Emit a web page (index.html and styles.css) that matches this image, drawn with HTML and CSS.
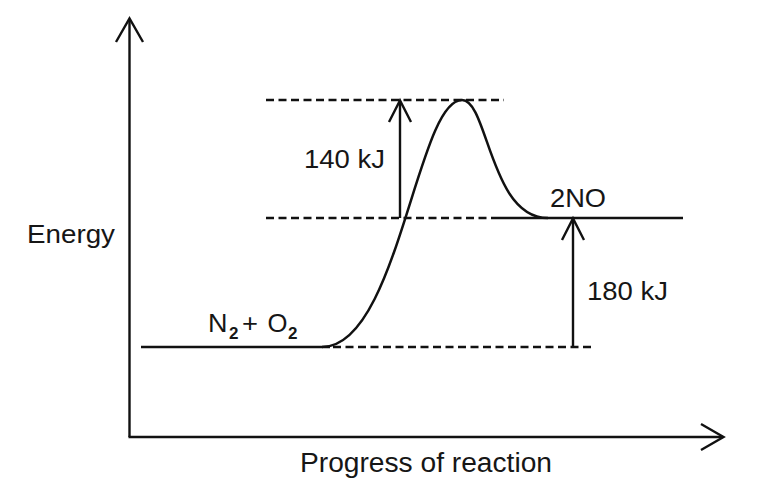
FILE: index.html
```html
<!DOCTYPE html>
<html lang="en">
<head>
<meta charset="utf-8">
<title>Energy profile: N2 + O2 → 2NO</title>
<link rel="stylesheet" href="styles.css">
</head>
<body>
<main class="page">
  <svg class="diagram" viewBox="0 0 758 486" width="758" height="486" xmlns="http://www.w3.org/2000/svg">
    <!-- axes -->
    <path class="line" d="M129.5 437 L129.5 19"/>
    <path class="line" d="M116 42 L129.5 18.5 L143 42"/>
    <path class="line" d="M128.5 437 L723 437"/>
    <path class="line" d="M701 424 L723.5 437 L701 450"/>

    <!-- levels -->
    <path class="line" d="M141 347 L330 347"/>
    <path class="dash" d="M333 347 L593 347"/>
    <path class="dash" d="M266 218 L495 218"/>
    <path class="line" d="M495 218 L683 218"/>
    <path class="dash" d="M266 100 L504 100"/>

    <!-- energy curve -->
    <path class="curve" d="M322 347 C398 347 417 100 462 100 C488 100 490 218 548 218"/>

    <!-- 140 kJ arrow -->
    <path class="line" d="M400 218 L400 101"/>
    <path class="line" d="M389 122 L400 100.5 L411 122"/>

    <!-- 180 kJ arrow -->
    <path class="line" d="M573 347 L573 219"/>
    <path class="line" d="M562 240 L573 218.5 L584 240"/>

    <!-- labels -->
    <text class="label" x="27" y="243" textLength="88" lengthAdjust="spacingAndGlyphs">Energy</text>
    <text class="label" x="304" y="168" textLength="81" lengthAdjust="spacingAndGlyphs">140 kJ</text>
    <text class="label" x="550" y="207" textLength="56" lengthAdjust="spacingAndGlyphs">2NO</text>
    <text class="label" x="587" y="300" textLength="81" lengthAdjust="spacingAndGlyphs">180 kJ</text>
    <text class="label" x="208" y="332" textLength="19.5" lengthAdjust="spacingAndGlyphs">N</text>
    <text class="sub" x="229" y="338.5">2</text>
    <text class="label" x="242" y="332" textLength="16" lengthAdjust="spacingAndGlyphs">+</text>
    <text class="label" x="267.5" y="332" textLength="20" lengthAdjust="spacingAndGlyphs">O</text>
    <text class="sub" x="288" y="338.5">2</text>
    <text class="label axis-title" x="300" y="472" textLength="252" lengthAdjust="spacingAndGlyphs">Progress of reaction</text>
  </svg>
</main>
</body>
</html>
```

FILE: styles.css
```css
html, body {
  margin: 0;
  padding: 0;
  background: #ffffff;
}

.page {
  width: 758px;
  height: 486px;
  overflow: hidden;
}

.diagram {
  display: block;
}

.line {
  fill: none;
  stroke: #111111;
  stroke-width: 2.4;
  stroke-linecap: butt;
  stroke-linejoin: miter;
}

.dash {
  fill: none;
  stroke: #111111;
  stroke-width: 2.4;
  stroke-dasharray: 8 4.5;
}

.curve {
  fill: none;
  stroke: #111111;
  stroke-width: 2.5;
}

.label {
  font-family: "Liberation Sans", Arial, Helvetica, sans-serif;
  font-size: 26.5px;
  fill: #161616;
}

.axis-title {
  font-size: 27px;
}

.sub {
  font-family: "Liberation Sans", Arial, Helvetica, sans-serif;
  font-size: 17px;
  font-weight: bold;
  fill: #161616;
}
```
